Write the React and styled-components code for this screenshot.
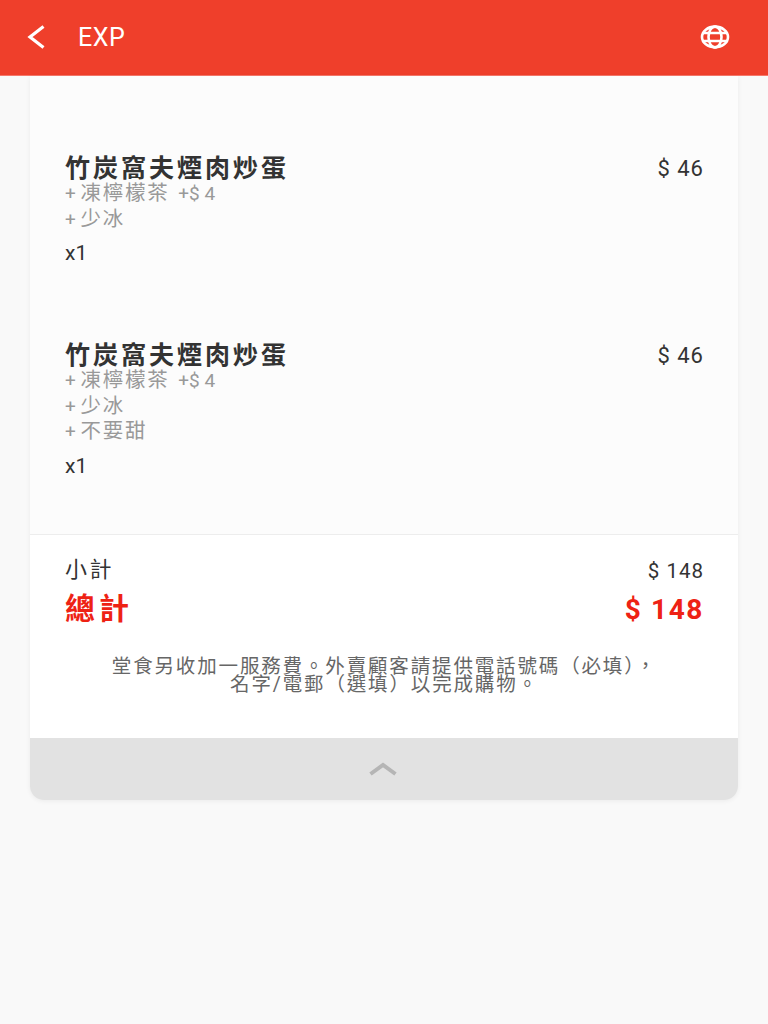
import React from "react";
import styled, { createGlobalStyle } from "styled-components";

const Global = createGlobalStyle`
  html, body { margin: 0; padding: 0; background: #f9f9f9; }
  body { font-family: Roboto, "Noto Sans CJK TC", sans-serif; }
`;

const Page = styled.div`
  width: 768px;
  height: 1024px;
  overflow: hidden;
  background: #f9f9f9;
`;

const Header = styled.header`
  height: 73px;
  border-bottom: 1px solid #f6776a;
  background: #ef3f2b;
  color: #fff;
  display: flex;
  align-items: center;
  padding: 0 38px 2px 27px;
`;

const HeaderTitle = styled.h1`
  flex: 1;
  margin: 2px 0 0 33px;
  font-size: 25px;
  line-height: 30px;
  font-weight: 400;
  letter-spacing: 0.6px;
`;

const Card = styled.main`
  width: 708px;
  margin: 0 0 0 30px;
  border-radius: 0 0 14px 14px;
  box-shadow: 0 1px 5px rgba(0, 0, 0, 0.06);
  overflow: hidden;
`;

const Items = styled.section`
  background: #fcfcfc;
  padding: 80px 34px 55px 35px;
  display: flex;
  flex-direction: column;
  gap: 77px;
  border-bottom: 1px solid #ededed;
`;

const Item = styled.article`
  display: flex;
  justify-content: space-between;
  align-items: flex-start;
`;

const ItemName = styled.div`
  font-size: 25px;
  line-height: 25px;
  font-weight: 700;
  color: #333;
  letter-spacing: 3px;
`;

const Price = styled.div`
  font-size: 22px;
  line-height: 25px;
  color: #333;
  letter-spacing: 1px;
`;

const Option = styled.div`
  font-size: 19px;
  line-height: 25.5px;
  color: #999;
`;

const OptionName = styled.span`
  font-size: 20.5px;
  letter-spacing: 1.75px;
`;

const OptionExtra = styled.span`
  margin-left: 4px;
`;

const Qty = styled.div`
  margin-top: 8px;
  font-size: 21px;
  line-height: 26px;
  color: #333;
`;

const Summary = styled.section`
  background: #fff;
  padding: 21px 34px 44px 35px;
`;

const Row = styled.div`
  display: flex;
  justify-content: space-between;
  height: ${(p) => (p.$total ? 52 : 27)}px;
  line-height: ${(p) => (p.$total ? 52 : 27)}px;
  font-size: ${(p) => (p.$total ? 28 : 20.5)}px;
  font-weight: ${(p) => (p.$total ? 700 : 400)};
  color: ${(p) => (p.$total ? "#ee2214" : "#333")};
`;

const RowLabel = styled.span`
  font-size: ${(p) => (p.$total ? 30 : 22)}px;
  letter-spacing: ${(p) => (p.$total ? 4 : 2.5)}px;
`;

const Amount = styled.span`
  line-height: ${(p) => (p.$total ? 54 : 31)}px;
  letter-spacing: ${(p) => (p.$total ? 1.6 : 1)}px;
`;

const Note = styled.p`
  margin: 23px 0 0;
  text-align: center;
  font-size: 19.5px;
  line-height: 18px;
  color: #666;
  letter-spacing: 1.85px;
`;

const Toggle = styled.div`
  height: 62px;
  background: #e2e2e2;
  display: flex;
  align-items: center;
  justify-content: center;
  padding-right: 2px;
`;

const Back = () => (
  <svg width="18" height="24" viewBox="0 0 18 24" fill="none" stroke="#fff" strokeWidth="3.2">
    <path d="M16.5 1.5 L3 12 L16.5 22.5" />
  </svg>
);

const Globe = () => (
  <svg width="30" height="24" viewBox="0 0 30 24" fill="none" stroke="#fff" strokeWidth="2.6">
    <ellipse cx="15" cy="12" rx="13" ry="10.4" />
    <ellipse cx="15" cy="12" rx="6.5" ry="10.4" />
    <path d="M3 8 H27 M3 16 H27" />
  </svg>
);

const Chevron = () => (
  <svg width="28" height="14" viewBox="0 0 28 14" fill="none" stroke="#b5b5b5" strokeWidth="4">
    <path d="M1.5 12 L14 3 L26.5 12" />
  </svg>
);

const orders = [
  { name: "竹炭窩夫煙肉炒蛋", price: "$ 46", options: [["凍檸檬茶", "+$ 4"], ["少冰"]] },
  { name: "竹炭窩夫煙肉炒蛋", price: "$ 46", options: [["凍檸檬茶", "+$ 4"], ["少冰"], ["不要甜"]] },
];

export default function App() {
  return (
    <Page>
      <Global />
      <Header>
        <Back />
        <HeaderTitle>EXP</HeaderTitle>
        <Globe />
      </Header>
      <Card>
        <Items>
          {orders.map((o, i) => (
            <Item key={i}>
              <div>
                <ItemName>{o.name}</ItemName>
                {o.options.map(([label, extra]) => (
                  <Option key={label}>
                    + <OptionName>{label}</OptionName> {extra && <OptionExtra>{extra}</OptionExtra>}
                  </Option>
                ))}
                <Qty>x1</Qty>
              </div>
              <Price>{o.price}</Price>
            </Item>
          ))}
        </Items>
        <Summary>
          <Row>
            <RowLabel>小計</RowLabel>
            <Amount>$ 148</Amount>
          </Row>
          <Row $total>
            <RowLabel $total>總計</RowLabel>
            <Amount $total>$ 148</Amount>
          </Row>
          <Note>
            堂食另收加一服務費。外賣顧客請提供電話號碼（必填），
            <br />
            名字/電郵（選填）以完成購物。
          </Note>
        </Summary>
        <Toggle>
          <Chevron />
        </Toggle>
      </Card>
    </Page>
  );
}
